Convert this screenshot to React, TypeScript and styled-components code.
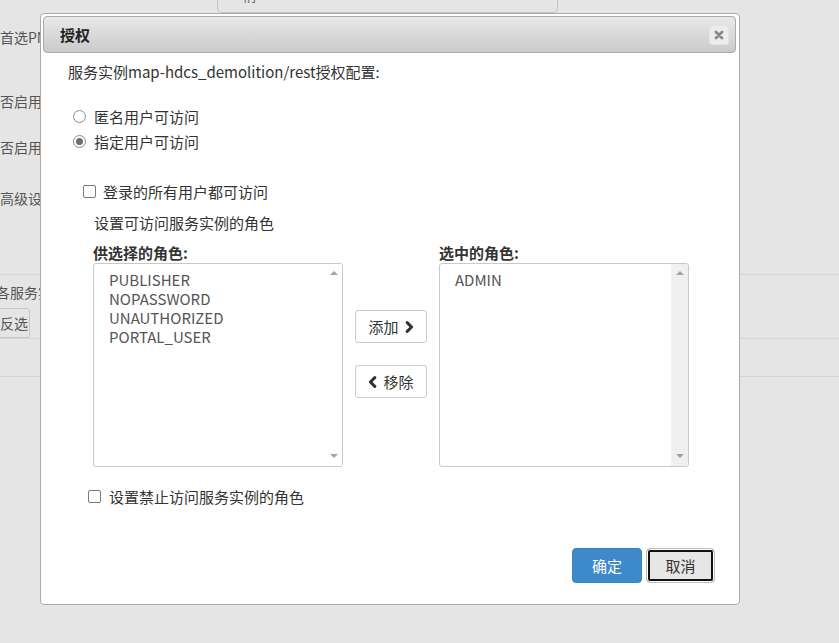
import styled, { createGlobalStyle } from "styled-components"

const GlobalStyle = createGlobalStyle`
  html, body {
    margin: 0;
    padding: 0;
    background: #e5e5e5;
  }
  body {
    font-family: "Noto Sans CJK SC", "Noto Sans", sans-serif;
    font-size: 15px;
    color: #333;
    overflow: hidden;
  }
  * {
    box-sizing: border-box;
  }
`

const Page = styled.div`
  position: relative;
  width: 839px;
  height: 643px;
  overflow: hidden;
  background: #e5e5e5;
`

/* --- page behind the dialog --- */

const Backdrop = styled.div`
  display: flex;
  flex-direction: column;
  color: #555;
  font-size: 14px;
`

const TopTab = styled.div`
  margin-left: 217px;
  width: 341px;
  height: 13px;
  border: 1px solid #c4c4c4;
  border-top: none;
  border-radius: 0 0 5px 5px;
  overflow: hidden;
  line-height: 15px;
  padding-left: 24px;
`

const TabText = styled.span`
  display: block;
  margin-top: -12px;
  color: #666;
`

const BgLabel = styled.div<{ $top: number; $left?: number }>`
  margin-top: ${(p) => p.$top}px;
  margin-left: ${(p) => p.$left ?? 0}px;
  line-height: 20px;
  white-space: nowrap;
`

const BgLine = styled.div<{ $top: number }>`
  margin-top: ${(p) => p.$top}px;
  height: 1px;
  background: #d6d6d6;
`

const BgButton = styled.div`
  margin-top: 6px;
  margin-left: -15px;
  width: 45px;
  height: 30px;
  border: 1px solid #c8c8c8;
  border-radius: 3px;
  display: flex;
  align-items: center;
  padding-left: 14px;
  color: #555;
  white-space: nowrap;
`

/* --- dialog --- */

const Dialog = styled.div`
  position: absolute;
  left: 40px;
  top: 13px;
  width: 700px;
  height: 592px;
  background: #fff;
  border: 1px solid #aaa;
  border-radius: 4px;
  padding: 2px 3px 2px 2px;
  display: flex;
  flex-direction: column;
`

const TitleBar = styled.div`
  height: 37px;
  border: 1px solid #aaa;
  border-radius: 4px;
  background: linear-gradient(#e8e8e8, #cbcbcb);
  display: flex;
  align-items: center;
  justify-content: space-between;
  padding: 0 6px 0 16px;
`

const Title = styled.span`
  font-weight: bold;
  font-size: 15px;
  color: #222;
`

const CloseButton = styled.button`
  width: 20px;
  height: 20px;
  padding: 0;
  border: 1px solid #e4e4e4;
  border-radius: 3px;
  background: #ececec;
  display: flex;
  align-items: center;
  justify-content: center;
`

const Body = styled.div`
  flex: 1;
  padding: 9px 0 0 25px;
  display: flex;
  flex-direction: column;
`

const Intro = styled.div`
  line-height: 20px;
  color: #333;
`

const OptionRow = styled.label<{ $top: number; $indent: number; $gap: number }>`
  display: flex;
  align-items: center;
  height: 25px;
  margin-top: ${(p) => p.$top}px;
  padding-left: ${(p) => p.$indent}px;
  gap: ${(p) => p.$gap}px;
  color: #333;
`

const Radio = styled.span<{ $checked?: boolean }>`
  width: 13px;
  height: 13px;
  border: 1px solid #8a8a8a;
  border-radius: 50%;
  background: #fff;
  display: flex;
  align-items: center;
  justify-content: center;
  &::after {
    content: "";
    width: 7px;
    height: 7px;
    border-radius: 50%;
    background: ${(p) => (p.$checked ? "#6f6f6f" : "transparent")};
  }
`

const Checkbox = styled.span`
  width: 13px;
  height: 13px;
  border: 1px solid #7a7a7a;
  border-radius: 2px;
  background: #fff;
`

const Hint = styled.div`
  margin-top: 6px;
  padding-left: 26px;
  line-height: 25px;
  color: #333;
`

const Picker = styled.div`
  margin-top: 8px;
  padding-left: 25px;
  display: flex;
  gap: 12px;
`

const Column = styled.div`
  width: 250px;
  display: flex;
  flex-direction: column;
`

const ColumnLabel = styled.div`
  font-weight: bold;
  line-height: 20px;
  color: #333;
`

const ListBox = styled.div`
  height: 204px;
  border: 1px solid #c9c9c9;
  border-radius: 3px;
  background: #fff;
  display: flex;
  overflow: hidden;
`

const Items = styled.div`
  flex: 1;
  padding: 6px 0 0 15px;
  line-height: 19px;
  color: #555;
`

const Scrollbar = styled.div<{ $shaded?: boolean }>`
  width: 17px;
  background: ${(p) => (p.$shaded ? "#f0f0f0" : "#fff")};
  display: flex;
  flex-direction: column;
  justify-content: space-between;
  align-items: center;
  padding: 7px 0 8px;
`

const Arrow = styled.span<{ $down?: boolean }>`
  width: 0;
  height: 0;
  border-left: 4px solid transparent;
  border-right: 4px solid transparent;
  ${(p) =>
    p.$down ? "border-top: 4px solid #a3a3a3;" : "border-bottom: 4px solid #a3a3a3;"}
`

const MoveColumn = styled.div`
  padding-top: 67px;
  display: flex;
  flex-direction: column;
  gap: 22px;
`

const MoveButton = styled.button`
  width: 72px;
  height: 33px;
  border: 1px solid #ccc;
  border-radius: 3px;
  background: #fff;
  font-family: inherit;
  font-size: 15px;
  color: #333;
  display: flex;
  align-items: center;
  justify-content: center;
  gap: 6px;
  padding: 0;
`

const Footer = styled.div`
  display: flex;
  justify-content: flex-end;
  gap: 4px;
  padding: 0 21px 19px 0;
`

const PrimaryButton = styled.button`
  width: 70px;
  height: 35px;
  border: 1px solid #3a83c3;
  border-radius: 4px;
  background: #3e89ca;
  color: #fff;
  font-family: inherit;
  font-size: 15px;
`

const CancelButton = styled.button`
  width: 69px;
  height: 35px;
  border: 1px solid #bdbdbd;
  border-radius: 4px;
  background: #e6e6e6;
  box-shadow: inset 0 0 0 1px #fff, inset 0 0 0 3px #111;
  color: #333;
  font-family: inherit;
  font-size: 15px;
`

function Chevron({ left }: { left?: boolean }) {
  return (
    <svg width="9" height="12" viewBox="0 0 9 12">
      <path
        d={left ? "M6.8 1.6 L2.4 6 L6.8 10.4" : "M2.2 1.6 L6.6 6 L2.2 10.4"}
        fill="none"
        stroke="#333"
        strokeWidth="3"
        strokeLinejoin="round"
        strokeLinecap="round"
      />
    </svg>
  )
}

function Role({ label, items, shaded }: { label: string; items: string[]; shaded?: boolean }) {
  return (
    <Column>
      <ColumnLabel>{label}</ColumnLabel>
      <ListBox>
        <Items>
          {items.map((item) => (
            <div key={item}>{item}</div>
          ))}
        </Items>
        <Scrollbar $shaded={shaded}>
          <Arrow />
          <Arrow $down />
        </Scrollbar>
      </ListBox>
    </Column>
  )
}

export default function App() {
  return (
    <Page>
      <GlobalStyle />
      <Backdrop>
        <TopTab>
          <TabText>稍</TabText>
        </TopTab>
        <BgLabel $top={14}>首选PNG</BgLabel>
        <BgLabel $top={44}>否启用</BgLabel>
        <BgLabel $top={26}>否启用</BgLabel>
        <BgLabel $top={31}>高级设置</BgLabel>
        <BgLine $top={66} />
        <BgLabel $top={7} $left={-4}>各服务实例</BgLabel>
        <BgButton>反选</BgButton>
        <BgLine $top={0} />
        <BgLine $top={37} />
      </Backdrop>

      <Dialog>
        <TitleBar>
          <Title>授权</Title>
          <CloseButton>
            <svg width="10" height="10" viewBox="0 0 10 10">
              <path d="M2 2 L8 8 M8 2 L2 8" stroke="#888" strokeWidth="2.8" strokeLinecap="round" />
            </svg>
          </CloseButton>
        </TitleBar>

        <Body>
          <Intro>服务实例map-hdcs_demolition/rest授权配置:</Intro>
          <OptionRow $top={22} $indent={5} $gap={8}>
            <Radio />
            匿名用户可访问
          </OptionRow>
          <OptionRow $top={0} $indent={5} $gap={8}>
            <Radio $checked />
            指定用户可访问
          </OptionRow>
          <OptionRow $top={25} $indent={15} $gap={7}>
            <Checkbox />
            登录的所有用户都可访问
          </OptionRow>
          <Hint>设置可访问服务实例的角色</Hint>
          <Picker>
            <Role
              label="供选择的角色:"
              items={["PUBLISHER", "NOPASSWORD", "UNAUTHORIZED", "PORTAL_USER"]}
            />
            <MoveColumn>
              <MoveButton>
                添加 <Chevron />
              </MoveButton>
              <MoveButton>
                <Chevron left /> 移除
              </MoveButton>
            </MoveColumn>
            <Role label="选中的角色:" items={["ADMIN"]} shaded />
          </Picker>
          <OptionRow $top={17} $indent={20} $gap={8}>
            <Checkbox />
            设置禁止访问服务实例的角色
          </OptionRow>
        </Body>

        <Footer>
          <PrimaryButton>确定</PrimaryButton>
          <CancelButton>取消</CancelButton>
        </Footer>
      </Dialog>
    </Page>
  )
}
